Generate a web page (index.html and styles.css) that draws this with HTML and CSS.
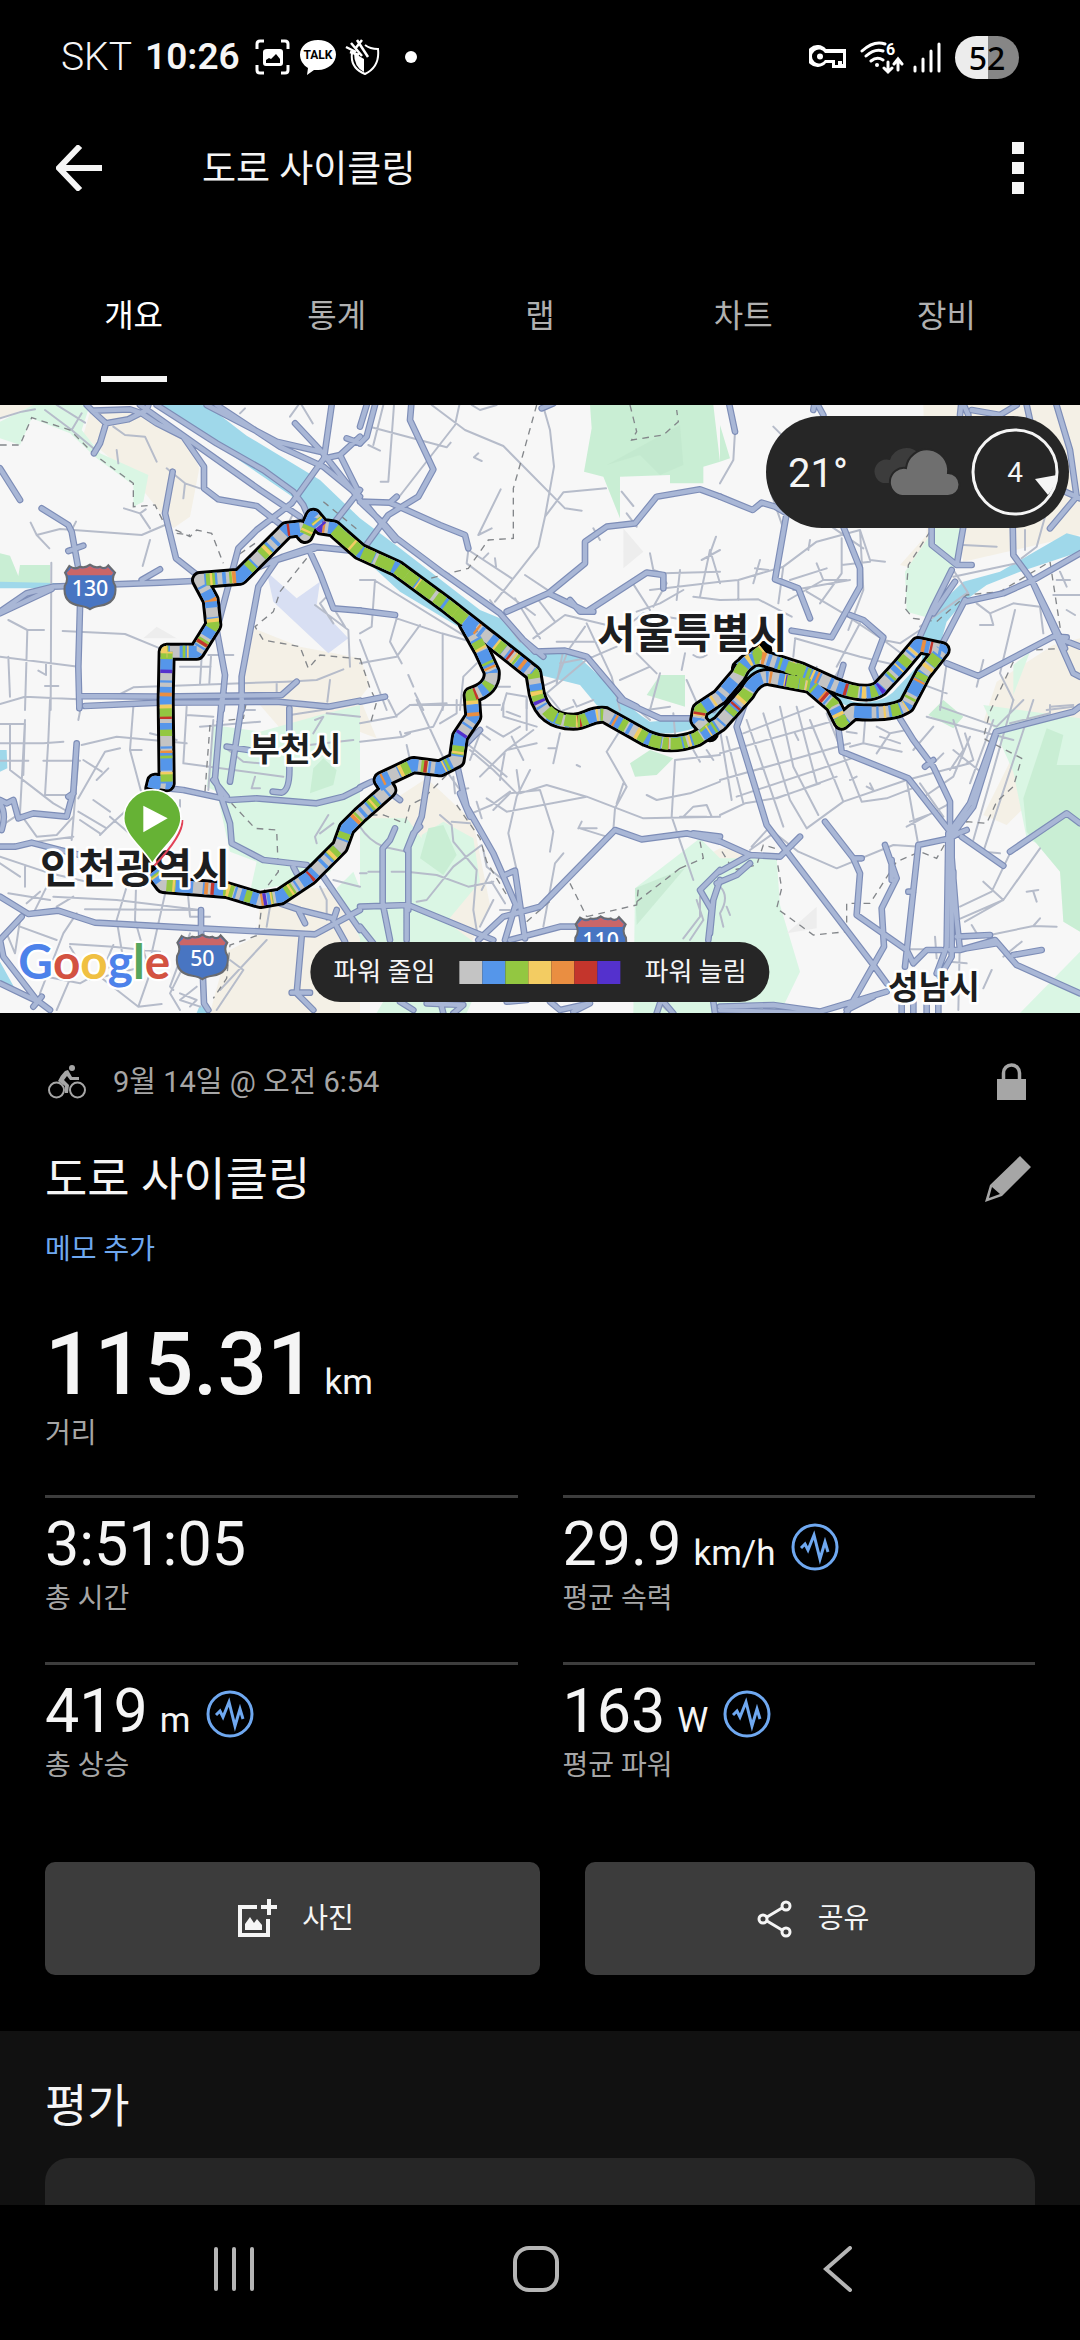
FILE: index.html
```html
<!DOCTYPE html>
<html lang="ko">
<head>
<meta charset="utf-8">
<meta name="viewport" content="width=device-width, initial-scale=1">
<title>도로 사이클링</title>
<link rel="stylesheet" href="styles.css">
</head>
<body>
<div class="status">
  <div class="status-side">
    <span class="carrier">SKT</span>
    <span class="clock">10:26</span>
    <svg class="st-icon" width="36" height="36" viewBox="0 0 36 36"><path d="M2 10V5q0-3 3-3h4M26 2h4q3 0 3 3v5M33 26v5q0 3-3 3h-4M9 34H5q-3 0-3-3v-5" fill="none" stroke="#fff" stroke-width="3"/><path fill="#fff" fill-rule="evenodd" d="M12 10h13q3 0 3 3v11q0 3-3 3H11q-3 0-3-3V13q0-3 4-3zM11 24h14v-4l-4-5-5 5-2-1-3 2z"/></svg>
    <svg class="st-icon" width="38" height="36" viewBox="0 0 38 36"><path fill="#fff" d="M19 1c10 0 18 6 18 14.500S29 31 19 31h-4l-7 5 1-7C4 26 1 21 1 15.500 1 7 9 1 19 1z"/><text class="talk" x="19" y="20" text-anchor="middle">TALK</text></svg>
    <svg class="st-icon" width="36" height="37" viewBox="0 0 36 37"><path d="M7 14q-2 15 13 21 15-7 13-25-8 0-13-4" fill="none" stroke="#fff" stroke-width="2"/><path fill="#fff" d="M9 14l10 6v13Q9 28 9 14z"/><path d="M1 8l10 5M6 4l11 13M12 1l11 17M5 13l9 3M17 1l-7 9" stroke="#fff" stroke-width="2.500"/></svg>
    <span class="dot"></span>
  </div>
  <div class="status-side">
    <svg width="38" height="24" viewBox="0 0 38 24"><path fill="#fff" fill-rule="evenodd" d="M17 4h20v19H23v-5h-6A11 11 0 1 1 17 4zM16 8a7 7 0 1 0 0 7h10v5h3v-4h4v3h1V8z"/><circle cx="11" cy="11.500" r="3" fill="#fff"/></svg>
    <svg class="wifi" width="44" height="38" viewBox="0 -2 44 38"><g fill="none" stroke="#fff" stroke-width="3" stroke-linecap="round"><path d="M2 11q12-11 23-7M6 16q9-8 17-5M11 21q6-5 12-1M28 22v10m-4-4l4 4 4-4M38 30V19m-4 5l4-5 4 5"/></g><circle cx="17" cy="25" r="2" fill="#fff"/><text class="six" x="26" y="15">6</text></svg>
    <svg class="signal" width="28" height="32" viewBox="0 0 28 32"><path d="M2 26v4M10 18v12M18 10v20M26 3v27" stroke="#fff" stroke-width="3" stroke-linecap="round"/></svg>
    <span class="battery">52</span>
  </div>
</div>

<header class="appbar">
  <button class="icon-btn" aria-label="뒤로"><svg width="46" height="46" viewBox="0 0 46 46"><path d="M24 1L3 23l21 22M3 23h43" fill="none" stroke="#f5f5f5" stroke-width="6"/></svg></button>
  <h1 class="app-title">도로 사이클링</h1>
  <button class="icon-btn" aria-label="더보기"><svg width="12" height="52" viewBox="0 0 12 52"><path fill="#f5f5f5" d="M0 0h12v12H0zM0 20h12v12H0zM0 40h12v12H0z"/></svg></button>
</header>

<nav class="tabs">
  <a href="#overview" class="tab tab-on">개요</a>
  <a href="#stats" class="tab">통계</a>
  <a href="#laps" class="tab">랩</a>
  <a href="#charts" class="tab">차트</a>
  <a href="#gear" class="tab">장비</a>
</nav>

<section class="map">
<svg class="map-art" viewBox="0 0 3240 1824" role="img" aria-label="경로 지도">
  <defs>
    <path id="route" d="M460 1150L465 1130 500 1135 497 885 500 740H590L640 660 632 585 600 525 720 515 860 375 900 370 915 390 940 335 965 365 1000 370 1080 440 1190 490 1340 600 1480 710 1600 805 1610 865Q1630 950 1720 950C1760 950 1770 925 1815 930L1940 1000Q2010 1030 2090 1000L2160 955 2240 865Q2270 810 2310 817L2430 840 2500 900 2525 950 2560 920Q2680 930 2720 900L2770 805 2825 735 2755 720 2700 785 2640 850Q2600 880 2500 840L2400 795 2290 760Q2240 750 2215 810L2160 875 2100 915 2095 945 2130 985M2220 790L2290 735"/>
    <path id="route2" d="M1400 655L1445 735 1475 800Q1480 850 1415 870L1420 935 1380 995 1370 1065 1320 1090 1240 1080 1145 1125 1165 1155 1080 1230 1040 1270 1020 1325 930 1415 840 1475 780 1485 680 1455 490 1440 460 1400"/>
    <g id="course"><use href="#route"/><use href="#route2"/></g>
    <g id="shield"><path d="M-62 -62Q-45 -50-30 -60-15 -55 0 -66 15 -55 30 -60 45 -50 55 -64L75 -42Q62 -22 76 -2 82 50 30 57 10 60 0 68-10 60-30 57-82 50-76 -2-62 -22-75 -42z" fill="#4875c2" stroke="#696b70" stroke-width="6"/><path d="M-56 -56Q-45 -47-30 -56-15 -51 0 -62 15 -51 30 -56 45 -47 54 -58L70 -42 65 -34H-66L-70 -42z" fill="#ca6668"/></g>
  </defs>
  <rect width="3240" height="1824" fill="#f7f7f7"/>

  <g fill="#f4f0e6">
    <path d="M0 0H110L0 40zM270 20L440 20 560 95 598 190 570 335 520 370 400 220 250 90zM760 670L900 725 1080 760V885L720 890zM780 900L1080 880 1130 1000 960 935 840 970zM780 1470L870 1450 1000 1450 1080 1600V1824H630L680 1640 775 1590zM1080 1250L1280 1120 1420 1250 1470 1500 1400 1640H1080zM2770 0H3240V390L2890 470 2870 370 2860 520 2700 480 2780 390zM2990 830L3160 720 3240 700V1040L3020 1260 2950 1230 3070 990 2950 950zM2030 1400L2160 1330 2330 1350 2240 1500 2160 1600 2060 1700z"/>
    <path d="M1080 760L1110 840 1080 880z"/>
  </g>
  <g fill="#daf6e4">
    <path d="M100 0H270L245 75 300 145 445 210 430 290 400 305 400 240 290 160 210 85 95 40 60 120 0 100V50zM620 1145L640 960 780 980 960 930 1080 900V1230L990 1400 900 1430 750 1460 770 1370 690 1340 650 1160zM1010 1450L1060 1400 1080 1450V1600zM1080 1240L1220 1240 1265 1300V1640H1080zM1265 1290L1330 1250 1420 1300 1440 1430 1340 1550 1460 1640H1265zM2790 370H2890L2860 490 2790 640 2720 620 2715 500 2790 390zM2160 1360L2330 1360 2340 1500 2400 1700 2340 1824H1900L1905 1450 2100 1300zM2950 900L3240 940V1380L3080 1300 3040 1100zM3040 780L3090 740 3040 870zM3060 1824L3240 1640V1824zM1260 1600L1480 1650 1400 1824H1130z"/>
  </g>
  <g fill="#c9eed4">
    <path d="M0 445L30 452 55 513 60 480H150V540H0zM1770 0H2140L2160 170 2110 185V235H2010V210L1860 215 1860 340 1810 215 1752 200 1775 70zM2160 60L2190 160 2160 170zM1980 810H2055V905L1940 870zM1890 1075L1950 1035 2020 1060 1970 1110 1905 1115zM930 1165L940 1090 970 1060 1010 1095 1000 1140zM1285 1270L1330 1260 1370 1350 1330 1410 1260 1360zM2785 930L2830 885 2890 935 2860 970zM3140 970L3190 990 3170 1080 3240 1080V1580L3190 1550 3180 1400 3080 1280 3070 1180z"/>
  </g>
  <path d="M1820 180L2040 60 2050 180 1980 210 1920 150zM1905 1450L2055 1390 1910 1560z" fill="#bfe6cc" opacity=".6"/>
  <path d="M800 500L890 580 960 530 950 600 1045 700 985 745 820 590z" fill="#d8dff3"/>
  <path d="M430 700L470 665 530 700zM1870 370L1930 440 1870 490zM2360 1585L2450 1505V1570z" fill="#ededed"/>

  <g fill="#9fd8ea">
    <path d="M475 0H620L740 92 960 225 1080 340 1200 430 1440 615 1500 640 1590 740 1730 750 1870 880Q1900 920 1950 950L2080 940 2180 840Q2230 760 2290 770L2560 890Q2650 900 2690 850L2765 770 2770 680Q2810 600 2890 530L3000 500 3200 385 3240 395V440L3060 500 2960 540 2890 590 2840 650 2820 720 2740 850Q2670 920 2560 910L2290 800Q2220 860 2150 940 2000 1020 1900 960L1790 900 1740 840 1620 810 1400 680 1200 560 1080 450 870 270z"/>
    <path d="M0 530L200 535 580 522V532L200 550 0 550zM730 540L765 575 745 555zM0 1035L20 1035 22 1090 0 1100zM0 1670L50 1760 0 1730zM600 1800L630 1824H590z"/>
  </g>

  <!-- local streets -->
  <g fill="none" stroke="#b6bcca" stroke-width="6" stroke-linecap="round" stroke-linejoin="round">
    <path transform="translate(0 -15)" d="M0 55L65 35 105 28M135 30L215 90 280 145M170 15L255 68M245 40L215 90M340 80L375 105 435 110 470 185M350 150L355 190M500 205L555 250 550 295M555 250L600 265M372 325L420 340 450 385M420 340L437 328M92 368L110 405 148 445M110 405L180 387 425 405 495 375M228 365L210 400M450 420L428 498M154 488L152 930M25 660L82 690H132M82 690L75 930M188 693L375 702 480 745M0 770L235 800M25 770L30 890M0 912L75 890 235 898M115 812L138 825V790M135 858H175M355 885L400 862 860 845 950 840 1030 808M625 765H700M540 800H632M600 850L605 770M628 848L633 770M945 615L1045 690 1050 800M980 590L1035 680M1000 670L960 610 980 590M990 840L982 905M830 848V880M870 50L895 15M905 15L938 70M720 40L735 25M880 340L870 360"/>
    <path transform="translate(1080 -15)" d="M215 15L315 90 430 138 615 325 665 332M550 20L570 90 582 200 555 350 535 440 405 605M70 15L40 135M25 135L60 152M102 15L85 245H62M35 82L260 142 272 128M298 15L285 75 110 300M422 268L355 405M395 385L355 405M555 350L610 277 738 265M335 15L360 30 410 15M342 172L365 183M342 172L355 160M0 540H42L350 730M45 540L35 680 0 700M0 790L110 770 180 675M110 655L90 725 125 790M110 655L245 700 350 730M248 705V930M325 450L320 490 525 645M325 450L455 535M408 500L405 475M370 475L385 460M495 525L570 575M535 600L585 665M520 715L615 645 740 675M465 595L540 715M590 725H740L850 640 1040 670M680 670L755 830 780 930M675 680L625 750 590 840M545 860L590 840M600 790L700 770 770 740M690 770L560 880 600 930M780 840L870 800M830 760L890 820M870 460L880 510 910 520 1080 515M970 570L900 610 830 635M815 545L870 630M870 570L1080 545M960 510L950 600M1020 590L1050 450 1080 550M1025 480L1080 450M1068 410L1050 460M1000 590L1080 600M785 275L820 318M800 340L830 380M700 385L720 420M980 840L1020 930M975 760L965 810M1000 765Q1020 780 1040 765M390 600L480 725M0 720L80 930M145 825L160 860M165 880L190 930M300 930L310 830 350 790M150 915H420M440 880L425 930M415 860H450M440 880L500 890V925M610 750L590 850M880 620L920 550 900 520M870 930L900 820"/>
    <path transform="translate(2160 -15)" d="M45 95L40 180 0 250M0 545L55 540 190 500 290 425 420 390 450 480 495 485M190 500L175 610M0 600L115 598 215 650M55 545V600M100 550L120 480M150 270L195 400M105 505L145 510M420 390L430 570 385 690M365 415V520L300 610M365 495L450 485M320 370L430 445M270 420L265 450M290 490L310 540 205 600M260 575L370 640 490 720 570 780M210 540L320 505M225 715L420 770 550 800M420 670L350 800M490 720L540 730 600 690M600 680L740 580M700 510L745 580M770 610L810 640 880 610 960 620 970 700M810 640L820 675H780M885 630L840 820M790 780L770 860M975 350L950 440 905 475M915 390V450M730 435L830 440M700 530L890 490M1020 515L1040 560M1010 540H1050M1040 630L1065 645M1000 585H1080M840 820L880 900M680 790L660 930M600 850L680 880M990 920L1060 915M290 800L280 860M320 870L370 790M225 720L220 770M160 80L190 110M380 540H310M220 570L390 540"/>
    <path transform="translate(0 885)" d="M0 72H75L70 225M0 130H130L190 125M30 75V210L95 260 160 310 195 330M75 60L60 340 0 380M150 0L145 120 135 285H220M0 182H85M130 182H240M235 180L215 420M245 10L235 60M245 135L350 110 560 130M400 20L390 150 430 300M390 150L425 150M360 145L315 155 235 295M290 240L325 205M250 180L305 215M280 300L330 335M235 335L320 385 300 405M240 360L300 400M320 385L380 330M330 350L400 410M560 20L550 190M560 45L640 50M600 80L780 65M640 60L625 270M730 30H765M450 100L530 120M550 190L850 230M685 150L730 185 780 190M765 230L755 265H780M60 340L110 410 170 405 220 350M0 440L220 410M0 470L150 520 280 550M0 490L60 530M75 500V560M25 580L150 600M80 610L120 575M100 640L160 520M220 590L170 620 180 640M160 590L350 600 600 630M255 628L590 630M380 560L350 660 370 780M410 500L405 660 450 820 415 920M500 560L455 760M560 540L570 650H630M230 640L190 700 120 880M60 680L170 720M20 700L45 760 60 660M210 732L340 740 480 755M340 735L300 830 415 920 485 912M230 790L170 930M330 800L240 850 140 830M800 720L660 870M690 780L730 810 650 930M520 870L510 860 570 700M580 740L510 880 540 930M540 880L590 900 570 920M590 860L540 900 600 920M450 830L430 780M210 740L270 840 430 800M985 345L945 410 950 430M1000 370L960 400M945 60L970 50 940 100M870 45L1000 25M980 40L1080 50M880 140L1060 120M960 560L980 600V660M1000 540L1080 560M810 620L800 680M540 300V320"/>
    <path transform="translate(1080 885)" d="M0 70L105 50 150 15 260 10M85 0L110 50M170 0L260 195M250 20L220 80 135 100M0 125L130 110 150 100M120 95L125 110M290 0V40L240 70M140 135L150 180M250 200L300 270 325 265M0 380Q25 420 70 440L140 455M240 345L275 375 280 425 350 510 340 630 355 720M275 365L330 370M0 520L20 520M25 515H70M95 515H140L230 525 325 560 400 545M365 435L280 500 200 600 170 605M370 450L380 500 430 540M365 570L390 520M395 545L435 610M280 230L285 280M350 305L365 355M335 340L395 315 450 275M330 150L400 210 470 280M320 130L440 230M360 100L330 180M390 120L350 90M380 80L430 110 480 80M430 10V50L530 80M440 35L480 50M500 0V90M440 150L530 130M455 110L490 180M435 155L420 240M360 230L440 150 520 90M380 295L440 335 680 290 850 355 1080 350M470 210L480 280 560 255 680 290M510 210L470 290 445 400 470 510M400 330L450 280 540 270 580 395 570 455M600 100L580 190M565 145H590M610 460L585 490 550 680M630 80L600 70M660 200L650 195M740 155L800 260 765 325 760 390M740 155L775 100M790 250L770 310M860 285L890 300 990 280 1080 245M660 385L740 410M655 385L665 365M660 385H710M945 180L935 350 1000 540M945 180L1080 165M960 350L1040 350M970 350L1000 320 1040 315 1055 350M1000 150L1020 185M1040 150L1060 180M640 20L560 50M640 0L650 20 700 0M810 10L870 60M860 30L930 20M945 100L940 40M1020 590V650L970 715M1010 600L1030 660 990 720M360 680L400 600M420 630H450M590 910L600 930M900 910L920 930"/>
    <path transform="translate(2160 885)" d="M0 90L35 300M20 110L70 310M80 60L190 380M130 40L210 300 260 385M180 20L220 200 295 345M230 20L290 250M270 60L370 305M320 40L425 305M0 160L350 60M0 240L390 130M50 290L410 170M70 100L280 20M0 345L75 310 165 295 300 250M170 295L350 230M440 0L430 130 545 155M430 130L390 140M470 80L510 100 560 90M480 110L540 130M510 100L470 160M380 95L410 100M225 100L235 120M160 400L90 450M95 440L150 380M165 400L235 455 350 505 520 435 600 440M260 385L370 305 560 240 750 190M425 305L500 295 590 260M560 240L595 435M570 365L650 335M600 250L670 350M560 380L690 310M640 190L670 160M620 285L700 230 750 110M700 150L775 210M690 210L730 150 700 60M620 50L880 120M660 20L830 80 910 0M880 0L760 420M940 0L790 455 840 460M990 15V40L870 70M980 30L1060 20M820 60L750 250M735 100L760 180 740 190M580 150L640 80M450 250L460 270M440 260L460 270M960 445L850 600 735 665M870 460L815 575 720 620M790 545L850 600M700 665L850 600M920 575L955 570M940 575L950 605M710 720L810 705 940 678 1010 680M940 678L960 655M755 675L770 700M905 725L850 770M815 810L790 865M645 710L650 775M560 748H670M720 700L715 930M690 785L740 790M0 560Q30 590 0 640L10 680M20 620L30 645M390 240L410 230"/>
  </g>

  <!-- administrative borders -->
  <g fill="none" stroke="#83868a" stroke-width="4" stroke-dasharray="20 16">
    <path d="M0 120L60 120 95 38 210 75 285 150 400 235V305L465 300 495 360 570 395 590 375 635 385 670 475M530 385L570 390M765 415L700 460M920 460L840 560 820 620 765 665 790 705 900 725 925 790 960 750 1080 762M970 290L1080 380M1610 0L1560 180 1540 250V400L1465 405 1405 490 1290 520M1890 0L1910 80 1895 105 1990 90 2035 50 2030 15M2790 380L2725 480 2715 610 2740 640 2810 650 2900 570 3000 560 3150 470 3190 730 3100 735M3040 770L2970 920 2950 1000 3065 1060 3040 1145 2990 1190 2960 1255 2900 1250 2890 1300 2850 1290 2810 1360 2760 1340 2690 1370 2610 1495 2540 1495 2540 1580 2440 1590 2330 1510 2345 1450 2325 1330 2290 1320 2270 1380 2200 1395 2160 1330M2040 1390L2110 1360 2100 1310M1910 1490L2040 1390M1760 1535L1910 1500 1915 1450M1710 1435L1760 1535M1580 1550L1660 1480M650 950L730 940 740 885M630 960L615 1160 690 1190 765 1270 830 1275 835 1400 790 1460 775 1590 690 1620 680 1720 640 1780M1340 1110L1270 1180 1230 1200 1215 1255 1150 1230 1090 1230M1370 1200L1440 1300 1460 1370 1520 1470"/>
    <path d="M1080 760L1110 850 1130 890 1110 960"/>
  </g>

  <!-- trunk roads: casing then fill -->
  <defs><g id="trunk">
    <path transform="translate(0 -15)" d="M0 205L60 300M125 325L205 375 215 395 235 505M205 453L250 437M240 620L235 800 238 920M0 635L80 580 160 560 480 548 580 543M0 640L155 567M425 540L480 508M240 888L480 890 845 885 890 845M255 918L480 908 830 905 985 920 1080 902M260 15L280 35 318 70 300 130 282 160M280 32L390 28 425 40M318 70L385 58 440 30 445 15M425 40L470 70 550 110 612 200V265L655 298 770 318 850 380M420 15L780 270 900 350M470 15L650 130 790 210 880 275 910 315 925 350M620 15L830 125 960 155M650 15L840 140 970 200 1080 290M995 15L972 175 875 310 770 390 715 445 695 520 650 690 675 825 665 930M885 70L965 155 1080 300M975 175L1020 165 1080 110M1020 165L1075 275M1080 270L1005 365M1040 115L1080 130M518 215L495 340 528 475 585 520M930 455L960 520 1000 625 1080 632M945 445L830 480 775 560 725 830V930M720 525L850 470 940 440 1080 455"/>
    <path transform="translate(1080 -15)" d="M155 0L150 60 220 208 175 290 85 345 15 440M0 305L90 308 240 375 315 405 325 445M90 308L110 290M0 305L75 375 110 415 250 520 420 640 490 720 525 755 615 752 680 770 790 900 830 920M15 310L105 420M20 15L0 80M45 15L20 110 0 130M0 632L105 645M440 635L565 580 675 490V425L740 380 825 370 890 290 1020 268 1080 290M565 580L680 635 860 518 910 525V565M630 600L660 635H700M490 720L550 770M0 905L75 890M545 25L580 10M1060 930L1080 900"/>
    <path transform="translate(2160 -15)" d="M25 0L45 95M0 290L98 330 125 308 165 320 200 340 165 538 235 565 270 655M370 380L420 505V560L335 712 215 692M280 30L285 0 310 45M390 645L430 660 490 712 455 805 475 850M370 795L360 830M635 380V435L710 495H755M730 380L710 495M695 510L640 620 595 720M705 545L640 640M735 600L665 735M735 605L850 580 940 540 1080 460M720 45L725 0 745 45M755 30L840 45 890 15M920 15L930 60M1005 0L1050 150 1070 290 990 385M1035 275L1080 295M878 370L880 465 935 540 990 650 1035 745M935 540L1060 820 1080 830M1030 720L1080 740M1040 712L1000 710 775 828 680 790M0 690L70 700"/>
    <path transform="translate(0 885)" d="M238 0V25M665 0L645 235 690 370 695 430 790 480 920 495M640 240L680 290M725 15L690 245M680 140L745 150M505 265L550 270 690 300 770 295 950 310 1030 290 1080 265M868 25V200Q870 270 845 278L818 275M0 300L20 310 40 300 55 355 100 340 200 350 220 275 230 130M0 310Q20 340 5 390M0 440L45 440 95 428 180 450M180 450L260 470M205 290L220 280M880 500L890 520M970 530L1080 690M840 610L900 630 1000 655M895 630L915 670M1000 660L1010 630M0 590L85 642 175 632 285 668 600 685 945 703 1080 630M603 630V690L612 910 625 930M65 650L0 720 10 770 110 900 150 930M0 850L115 905M125 890L100 920M905 710L890 880 940 930M875 878H930M1010 680L1035 725"/>
    <path transform="translate(1080 885)" d="M290 190L320 320 400 460 470 620M300 280L330 350M0 262L35 245M100 285L120 300M205 220L185 350 145 440V630M140 450L160 400 180 380M105 385L90 420 68 445V610L90 720M0 620L145 615 400 720M140 620V720M0 680L40 730M435 525L465 512 495 715M465 620L435 720M355 720L430 650 540 620 765 390 845 418 980 400 1080 425M450 720L600 680H650M780 0L900 55 990 55M360 90L320 130M120 905L160 930M200 910L310 915 280 940M240 900L250 940M440 905L500 900M570 905L600 930 690 910 640 935M900 910L890 940M910 905L940 940M1060 905L1065 940M1080 510L1020 570 1055 630 1045 720M1080 540L1060 600 1050 700M1000 400L1080 410"/>
    <path transform="translate(2160 885)" d="M75 10L50 80 140 375 460 795 500 850M-10 420L90 465 180 470 240 410M90 465L0 515M90 490L50 525 -10 550M355 85L365 155 565 235 690 395M530 40L580 120 640 200 690 305V400M615 200L640 180M1080 20L1060 35 828 95 750 310 690 395M830 95L760 320 700 400M595 435L690 415 715 400 740 390M595 435L555 800M685 400L680 740 650 820M695 400V770L660 830M690 410L710 660 720 750M700 515V550M725 410L850 497M870 455L1040 340 1080 370M315 365L400 475H425M400 475L420 520 410 645 560 750 580 790M495 435L530 535 485 625 492 740 395 910 380 940M515 480V540M565 575H580M580 790L620 750H665M690 750H720L825 720 890 795 1080 880M710 710L810 705M740 745L830 730M880 765L965 750M0 920L160 915 300 935 500 875M0 930L280 940M380 930L460 890M545 900V940M580 905V940M620 900V940M655 900V940"/>
  </g></defs>
  <use href="#trunk" fill="none" stroke="#7d8db7" stroke-width="20" stroke-linecap="round" stroke-linejoin="round"/>
  <use href="#trunk" fill="none" stroke="#a9b7d6" stroke-width="13" stroke-linecap="round" stroke-linejoin="round"/>

  <!-- ride, coloured by power -->
  <g fill="none" stroke-linejoin="round">
    <use href="#course" stroke="#000" stroke-width="54" stroke-linecap="round"/>
    <use href="#course" stroke="#c4c4c4" stroke-width="36"/>
    <g stroke-width="36">
      <use href="#course" stroke="#5596ea" stroke-dasharray="39 15 11 29 53 13 7 31"/>
      <use href="#course" stroke="#93c741" stroke-dasharray="0 61 27 43 8 59 19 37 31 83"/>
      <use href="#course" stroke="#f3cc62" stroke-dasharray="0 83 7 59 5 127 11 71"/>
      <use href="#course" stroke="#ea8e41" stroke-dasharray="0 147 7 163 11 231"/>
      <use href="#course" stroke="#c4352c" stroke-dasharray="0 249 7 311 10 273"/>
      <use href="#course" stroke="#5431cd" stroke-dasharray="0 387 10 471"/>
    </g>
    <path d="M1010 380L1080 440 1190 490 1340 600 1395 645" stroke="#93c741" stroke-width="36" stroke-dasharray="52 14 25 9 37 11"/>
    <path d="M1640 915Q1670 950 1740 948M1950 1005Q2010 1025 2060 1010M2360 785L2430 810M2360 827L2430 840" stroke="#93c741" stroke-width="36" stroke-dasharray="34 5 17 7"/>
  </g>

  <g class="place">
    <text x="1792" y="728" font-size="124">서울특별시</text>
    <text x="748" y="1069" font-size="100">부천시</text>
    <text x="120" y="1433" font-size="124">인천광역시</text>
    <text x="2664" y="1782" font-size="100">성남시</text>
  </g>
  <use href="#shield" x="270" y="545"/><use href="#shield" x="607" y="1655"/><use href="#shield" x="1802" y="1600"/>
  <g class="road-no"><text x="270" y="572">130</text><text x="607" y="1684">50</text><text x="1802" y="1630">110</text></g>

  <path d="M463 1382Q550 1290 547 1245" fill="none" stroke="#e24156" stroke-width="6"/>
  <path d="M457 1376C430 1330 371 1290 371 1240a86 86 0 0 1 172 0C543 1290 484 1330 457 1376z" fill="#66b235" stroke="#fff" stroke-width="5"/>
  <path d="M430 1202L503 1240 430 1282z" fill="#fff"/>
  <text class="google" x="55" y="1723"><tspan fill="#4d82ea">G</tspan><tspan fill="#d35241">o</tspan><tspan fill="#f0c042">o</tspan><tspan fill="#4d82ea">g</tspan><tspan fill="#56a65d">l</tspan><tspan fill="#d35241">e</tspan></text>
</svg>
  <div class="weather">
    <span class="temp">21°</span>
    <svg width="90" height="50" viewBox="0 0 90 50"><path fill="#3c3c3c" d="M12 36A12 12 0 0 1 19 13 17 17 0 0 1 48 7L50 36z"/><path d="M31 49a14 14 0 1 1 4-28 20 20 0 0 1 42 5 11 11 0 0 1 0 23z" fill="#6f6f6f" stroke="#262626" stroke-width="2"/></svg>
    <svg class="wind" width="88" height="88" viewBox="0 0 88 88"><circle cx="44" cy="44" r="42" fill="none" stroke="#f5f5f5" stroke-width="3"/><path d="M64 51l22-4q-2 12-9 20z" fill="#f5f5f5"/><text x="44" y="54" text-anchor="middle">4</text></svg>
  </div>
  <div class="legend">
    <span>파워 줄임</span>
    <div class="swatches"><i class="c1"></i><i class="c2"></i><i class="c3"></i><i class="c4"></i><i class="c5"></i><i class="c6"></i><i class="c7"></i></div>
    <span>파워 늘림</span>
  </div>
</section>

<main class="summary">
  <div class="row date-row">
    <svg class="bike" width="38" height="35" viewBox="0 0 38 35"><g fill="none" stroke="#a6a6a6" stroke-width="2"><circle cx="8.500" cy="26" r="7.500"/><circle cx="29.500" cy="26" r="7.500"/></g><circle cx="24" cy="4" r="3" fill="#a6a6a6"/><path d="M20 6l4 7h7v3h-9l-3-4-3 4 5 5-1 8h-3v-7l-7-5q2-5 7-10z" fill="#a6a6a6"/></svg>
    <span class="date">9월 14일 @ 오전 6:54</span>
    <svg class="push lock" width="30" height="38" viewBox="0 0 30 38"><path fill="#a6a6a6" d="M0 17h29v21H0z"/><path d="M6.500 18v-7a8 8 0 0 1 16 0v7" fill="none" stroke="#a6a6a6" stroke-width="3.500"/></svg>
  </div>
  <div class="row title-row">
    <h2 class="heading">도로 사이클링</h2>
    <button class="push icon-btn" aria-label="이름 수정"><svg width="46" height="46" viewBox="0 0 46 46"><path fill="#a6a6a6" fill-rule="evenodd" d="M35 0l11 11-29 29L0 46 5 29zM7 31L4 42l11-4z"/></svg></button>
  </div>
  <a href="#memo" class="memo">메모 추가</a>
  <div class="distance"><strong>115.31</strong><span class="unit">km</span></div>
  <div class="label">거리</div>
  <div class="stats">
    <div class="stat"><div class="value">3:51:05</div><div class="label">총 시간</div></div>
    <div class="stat"><div class="value">29.9<span class="unit">km/h</span><svg class="pulse" width="48" height="48" viewBox="0 0 48 48"><circle cx="24" cy="24" r="22" /><path d="M10 25l4-4 3 6 6-15 6 24 5-17 3 10"/></svg></div><div class="label">평균 속력</div></div>
    <div class="stat"><div class="value">419<span class="unit">m</span><svg class="pulse" width="48" height="48" viewBox="0 0 48 48"><circle cx="24" cy="24" r="22" /><path d="M10 25l4-4 3 6 6-15 6 24 5-17 3 10"/></svg></div><div class="label">총 상승</div></div>
    <div class="stat"><div class="value">163<span class="unit">W</span><svg class="pulse" width="48" height="48" viewBox="0 0 48 48"><circle cx="24" cy="24" r="22" /><path d="M10 25l4-4 3 6 6-15 6 24 5-17 3 10"/></svg></div><div class="label">평균 파워</div></div>
  </div>
  <div class="actions">
    <button class="action"><svg width="40" height="40" viewBox="0 0 40 40"><path d="M20 8H3v28h28V20M24 8h16M32 0v16" fill="none" stroke="#f5f5f5" stroke-width="4"/><path fill="#f5f5f5" d="M8 31v-6l5-7 4 6 3-4 5 6v5z"/></svg>사진</button>
    <button class="action"><svg width="36" height="40" viewBox="0 0 36 40"><g fill="none" stroke="#f5f5f5" stroke-width="3"><circle cx="6" cy="20" r="4"/><circle cx="29" cy="7" r="4"/><circle cx="29" cy="33" r="4"/><path d="M10 18L25 9M10 22l15 9"/></g></svg>공유</button>
  </div>
</main>

<section class="rating">
  <h2 class="heading">평가</h2>
  <div class="rating-card"></div>
</section>

<footer class="sysnav">
  <button class="nav-btn" aria-label="최근 앱"><svg width="42" height="46" viewBox="0 0 42 46"><path d="M3 3v40M21 3v40M39 3v40" stroke="#b5b5b5" stroke-width="4" stroke-linecap="round"/></svg></button>
  <button class="nav-btn" aria-label="홈"><svg width="46" height="46" viewBox="0 0 46 46"><rect x="2" y="2" width="42" height="42" rx="14" fill="none" stroke="#b5b5b5" stroke-width="4"/></svg></button>
  <button class="nav-btn" aria-label="이전"><svg width="30" height="46" viewBox="0 0 30 46"><path d="M27 2L3 23l24 21" fill="none" stroke="#b5b5b5" stroke-width="4" stroke-linecap="round"/></svg></button>
</footer>
</body>
</html>
```
FILE: styles.css
```css
* { box-sizing: border-box; }

body {
  margin: 0;
  min-height: 100vh;
  display: flex;
  flex-direction: column;
  background: #000;
  color: #f5f5f5;
  font-family: Roboto, "Noto Sans CJK KR", sans-serif;
  font-size: 28px;
}

h1, h2 { margin: 0; font-weight: 400; }
svg { display: block; flex: none; }
a { text-decoration: none; }
button {
  margin: 0;
  padding: 0;
  border: 0;
  background: none;
  color: inherit;
  font: inherit;
}

/* system status bar */
.status {
  display: flex;
  justify-content: space-between;
  height: 114px;
  padding: 0 61px;
}
.status-side { display: flex; align-items: center; }
.carrier { font-size: 39px; font-weight: 300; line-height: 48px; }
.clock { margin: 0 15px 0 13px; font-size: 37px; font-weight: 600; line-height: 48px; }
.st-icon { margin-right: 8px; }
.talk { font: 700 12px Roboto, sans-serif; fill: #000; }
.six { font: 700 16px Roboto, sans-serif; fill: #fff; }
.dot { width: 12px; height: 12px; margin-left: 16px; border-radius: 50%; background: #fff; }
.wifi { margin: 0 9px 0 13px; }
.signal { margin-right: 14px; }
.battery {
  width: 64px;
  height: 43px;
  border-radius: 22px;
  background: linear-gradient(90deg, #ececec 52%, #868686 52%);
  color: #000;
  font: 500 32px/43px "Noto Sans", sans-serif;
  text-align: center;
}

/* app bar */
.appbar { display: flex; align-items: center; height: 108px; padding: 0 56px; }
.icon-btn { display: flex; }
.app-title { flex: 1; margin-left: 100px; padding-top: 3px; font-size: 37px; line-height: 56px; }

.tabs { display: grid; grid-template-columns: repeat(5, 1fr); padding: 0 32px 23px; }
.tab {
  position: relative;
  height: 160px;
  padding-top: 70px;
  color: #b0b0b0;
  font-size: 32px;
  line-height: 48px;
  text-align: center;
}
.tab-on { color: #fff; }
.tab-on::after {
  content: "";
  position: absolute;
  left: 50%;
  bottom: 0;
  width: 66px;
  height: 6px;
  margin-left: -33px;
  background: #f5f5f5;
}

/* map */
.map { position: relative; overflow: hidden; }
.map-art { width: 100%; height: auto; }
.place {
  font-family: "Noto Sans CJK KR", sans-serif;
  font-weight: 700;
  fill: #1d1e20;
  stroke: #fff;
  stroke-width: 16;
  stroke-linejoin: round;
  paint-order: stroke;
}
.road-no { font: 500 64px "Noto Sans", sans-serif; fill: #fff; text-anchor: middle; }
.google {
  font: 700 143px Lato, sans-serif;
  stroke: #fff;
  stroke-width: 14;
  stroke-linejoin: round;
  paint-order: stroke;
}
.weather {
  position: absolute;
  top: 11px;
  right: 11px;
  display: flex;
  align-items: center;
  height: 112px;
  padding: 0 10px 0 22px;
  border-radius: 56px;
  background: #262626;
}
.temp { margin-right: 23px; padding-top: 2px; font-size: 40px; }
.wind { margin-left: 10px; }
.wind text { font: 400 28px Roboto, sans-serif; fill: #f5f5f5; }
.legend {
  position: absolute;
  left: 50%;
  bottom: 11px;
  transform: translateX(-50%);
  display: flex;
  align-items: center;
  gap: 24px;
  height: 60px;
  padding: 0 23px;
  border-radius: 30px;
  background: #262626;
  font-size: 26px;
  line-height: 36px;
  white-space: nowrap;
}
.swatches { display: flex; }
.swatches i { width: 23px; height: 23px; }
.c1 { background: #c4c4c4; }
.c2 { background: #5596ea; }
.c3 { background: #93c741; }
.c4 { background: #f3cc62; }
.c5 { background: #ea8e41; }
.c6 { background: #c4352c; }
.c7 { background: #5431cd; }

/* activity summary */
.summary { padding: 40px 45px 56px; }
.row { display: flex; align-items: center; }
.push { margin-left: auto; }
.bike { margin-left: 3px; }
.date-row { height: 56px; }
.date { margin-left: 27px; padding-top: 2px; color: #a6a6a6; font-size: 29px; line-height: 40px; }
.lock { margin-right: 8px; }
.title-row { height: 72px; margin-top: 34px; padding-right: 4px; }
.heading { font-size: 46px; line-height: 68px; }
.memo { display: block; margin-top: 15px; color: #6fa8f0; line-height: 40px; }
.distance { display: flex; align-items: baseline; height: 104px; margin-top: 42px; line-height: 104px; }
.distance strong { font-size: 87px; font-weight: 500; }
.unit { margin-left: 12px; font-size: 35px; }
.distance .unit { margin-left: 8px; }
.distance + .label { margin-top: -2px; }
.label { color: #a6a6a6; line-height: 40px; }
.stats { display: grid; grid-template-columns: 1fr 1fr; column-gap: 45px; margin-top: 41px; }
.stat { height: 167px; padding-top: 12px; border-top: 3px solid #3d3d3d; }
.value { display: flex; align-items: baseline; height: 69px; font-size: 61px; line-height: 69px; }
.pulse { align-self: center; margin: 4px 0 0 15px; fill: none; stroke: #6fa8f0; stroke-width: 3; }
.actions { display: grid; grid-template-columns: 11fr 10fr; gap: 45px; margin-top: 33px; }
.action {
  display: flex;
  align-items: center;
  justify-content: center;
  gap: 25px;
  height: 113px;
  padding-left: 6px;
  border-radius: 10px;
  background: #3c3c3c;
  line-height: 40px;
}

.rating { flex: 1; display: flex; flex-direction: column; padding: 41px 45px 0; background: #111; }
.rating-card { flex: 1; min-height: 44px; margin-top: 18px; border-radius: 24px 24px 0 0; background: #262626; }

/* system navigation */
.sysnav { display: flex; justify-content: space-between; align-items: center; height: 135px; padding: 0 219px 8px 211px; }
.nav-btn { display: flex; justify-content: center; width: 46px; }
```
